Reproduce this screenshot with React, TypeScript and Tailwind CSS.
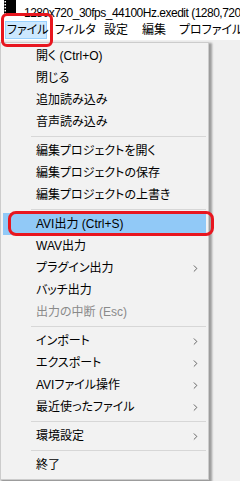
import { ChevronRight } from "lucide-react";

type Item = { label: string; arrow?: boolean; disabled?: boolean; hot?: boolean };

const groups: Item[][] = [
  [
    { label: "開く (Ctrl+O)" },
    { label: "閉じる" },
    { label: "追加読み込み" },
    { label: "音声読み込み" },
  ],
  [
    { label: "編集プロジェクトを開く" },
    { label: "編集プロジェクトの保存" },
    { label: "編集プロジェクトの上書き" },
  ],
  [
    { label: "AVI出力 (Ctrl+S)", hot: true },
    { label: "WAV出力" },
    { label: "プラグイン出力", arrow: true },
    { label: "バッチ出力" },
    { label: "出力の中断 (Esc)", disabled: true },
  ],
  [
    { label: "インポート", arrow: true },
    { label: "エクスポート", arrow: true },
    { label: "AVIファイル操作", arrow: true },
    { label: "最近使ったファイル", arrow: true },
  ],
  [{ label: "環境設定", arrow: true }],
  [{ label: "終了" }],
];

// fixed slot widths so the labels sit where Windows put them
const menuBar = [
  { label: "フィルタ", w: "w-[49px]" },
  { label: "設定", w: "w-[38px]" },
  { label: "編集", w: "w-[37px]" },
  { label: "プロファイル", w: "w-[61px]" },
];

function FilmIcon() {
  return (
    <svg width="12" height="15" viewBox="0 0 12 15" className="shrink-0">
      <rect x="0" y="0" width="12" height="15" fill="#000" />
      {[1, 4, 7, 10, 13].map((y) => (
        <rect key={y} x="0.5" y={y} width="1.5" height="1.5" fill="#fff" />
      ))}
    </svg>
  );
}

export default function App() {
  return (
    <div className="relative w-[240px] h-[481px] overflow-hidden bg-[#f0f0f0] text-[12px] text-black font-['Liberation_Sans','Noto_Sans_CJK_JP',sans-serif] [font-feature-settings:'palt']">
      <div className="h-[19px] bg-white flex items-start gap-[8px] pl-[4px]">
        <FilmIcon />
        <span className="whitespace-nowrap leading-[12px] pt-[7px] tracking-[-0.5px]">
          1280x720_30fps_44100Hz.exedit (1280,720)
        </span>
      </div>
      <div className="h-[22px] bg-white flex items-start pt-[2px] pl-[5px] border-b border-[#f0f0f0]">
        <div className="shrink-0 h-[18px] w-[42px] pl-[1px] flex items-center bg-[#cce8ff] border border-[#99d1ff] whitespace-nowrap">
          ファイル
        </div>
        <div className="shrink-0 w-[8px]" />
        {menuBar.map((m) => (
          <div key={m.label} className={m.w + " shrink-0 h-[18px] flex items-center whitespace-nowrap"}>
            {m.label}
          </div>
        ))}
      </div>

      <div className="absolute left-0 top-[42px] w-[209px] bg-[#f2f2f2] border border-[#cccccc] pt-[2px] pb-[3px] shadow-[2px_2px_2px_1px_rgba(0,0,0,0.35)]">
        {groups.map((g, gi) => (
          <div key={gi}>
            {gi > 0 && (
              <div className="h-[7px] flex items-center ml-[30px] mr-[2px]">
                <div className="h-px w-full bg-[#d7d7d7]" />
              </div>
            )}
            {g.map((it) => (
              <div
                key={it.label}
                className={
                  "h-[22px] mx-[2px] pl-[33px] pr-[5px] flex items-center justify-between whitespace-nowrap " +
                  (it.hot ? "bg-[#91c9f7] " : "") +
                  (it.disabled ? "text-[#8a8a8a]" : "text-black")
                }
              >
                <span>{it.label}</span>
                {it.arrow && (
                  <ChevronRight size={11} strokeWidth={1.6} className="text-[#333]" />
                )}
              </div>
            ))}
          </div>
        ))}
      </div>

      <div className="absolute left-[1px] top-[13px] w-[52px] h-[34px] rounded-[6px] border-[3px] border-[#e8161f]" />
      <div className="absolute left-[8px] top-[211px] w-[206px] h-[25px] rounded-[8px] border-[3px] border-[#e8161f]" />
    </div>
  );
}
